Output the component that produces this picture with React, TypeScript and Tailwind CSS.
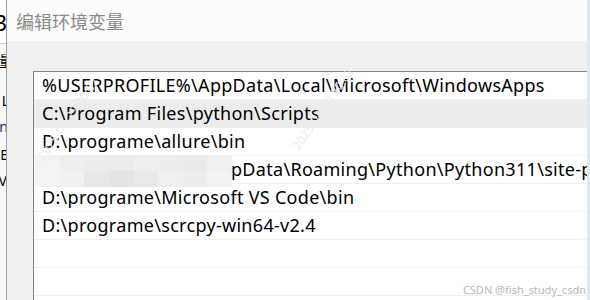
import React from 'react'

const rows = [
  '%USERPROFILE%\\AppData\\Local\\Microsoft\\WindowsApps',
  'C:\\Program Files\\python\\Scripts',
  'D:\\programe\\allure\\bin',
  'pData\\Roaming\\Python\\Python311\\site-packages',
  'D:\\programe\\Microsoft VS Code\\bin',
  'D:\\programe\\scrcpy-win64-v2.4',
  '',
  '',
]

const mosaic = [
  ['#f3f3f3', '#eeeeee', '#ececec', '#ebebeb', '#eeeeee', '#ececec', '#eaeaea', '#f0f0f0'],
  ['#f4f4f4', '#f0f0f0', '#e8e8e8', '#e4e4e4', '#e9e9e9', '#efefef', '#ececec', '#f2f2f2'],
]

export default function App() {
  return (
    <div className="relative w-[590px] h-[300px] overflow-hidden flex bg-white font-['Noto_Sans','Noto_Sans_CJK_SC',sans-serif]">
      {/* window behind, clipped */}
      <div className="w-[7px] shrink-0 flex flex-col items-end overflow-hidden bg-[#f7f7f7] border-r border-[#a0a0a0] text-black">
        <div className="h-[44px] w-full shrink-0 flex items-center justify-end border-b border-[#cfcfcf] bg-white">
          <span className="text-[22px] leading-none -mr-[1px]">3</span>
        </div>
        <div className="mt-[10px] text-[14px] leading-none underline -mr-[7px]">量</div>
        <div className="mt-[26px] text-[14px] leading-none -mr-[3px]">L</div>
        <div className="mt-[12px] text-[14px] leading-none text-[#1a2a6a] -mr-[2px]">n</div>
        <div className="mt-[14px] text-[14px] leading-none -mr-[2px]">E</div>
        <div className="mt-[12px] text-[14px] leading-none -mr-[1px]">V</div>
      </div>

      {/* dialog */}
      <div className="flex-1 min-w-0 flex flex-col">
        <div className="h-[41px] shrink-0 bg-[#fcfcfc] flex items-center pl-[9px]">
          <span className="text-[18px] leading-none text-[#8a8a8a] font-['Noto_Sans_CJK_SC',sans-serif]">编辑环境变量</span>
        </div>
        <div className="flex-1 bg-[#f0f0f0] pt-[30px] pl-[26px]">
          <div className="relative h-full bg-white border-t border-l border-[#838383] overflow-hidden">
            {rows.map((r, i) => (
              <div
                key={i}
                className={`h-[28px] border-b border-[#f0f0f0] flex items-center whitespace-nowrap overflow-hidden text-[18px] tracking-[0.3px] text-black ${i === 1 ? 'bg-[#ececec]' : ''} ${i === 3 ? 'pl-[197px]' : 'pl-[8px]'}`}
              >
                {r}
              </div>
            ))}
            {/* blurred region */}
            <div className="absolute left-[1px] top-[83px] w-[197px] h-[32px] flex flex-col">
              {mosaic.map((line, j) => (
                <div key={j} className="flex flex-1">
                  {line.map((c, k) => (
                    <div key={k} className="flex-1" style={{ backgroundColor: c }} />
                  ))}
                </div>
              ))}
            </div>
          </div>
        </div>
      </div>

      {/* window edge */}
      <div className="w-[3px] shrink-0 bg-[#dfe8f3]" />

      {/* watermarks */}
      <span className="absolute left-[20px] top-[110px] -rotate-[55deg] text-[12px] text-[#ececec] whitespace-nowrap">2025-04-29 20:02</span>
      <span className="absolute left-[275px] top-[100px] -rotate-[55deg] text-[12px] text-[#ececec] whitespace-nowrap">2025-04-29 20:02</span>
      <span className="absolute right-[4px] bottom-[5px] text-[11px] leading-none text-[#b8b8b8] whitespace-nowrap">CSDN @fish_study_csdn</span>
    </div>
  )
}
